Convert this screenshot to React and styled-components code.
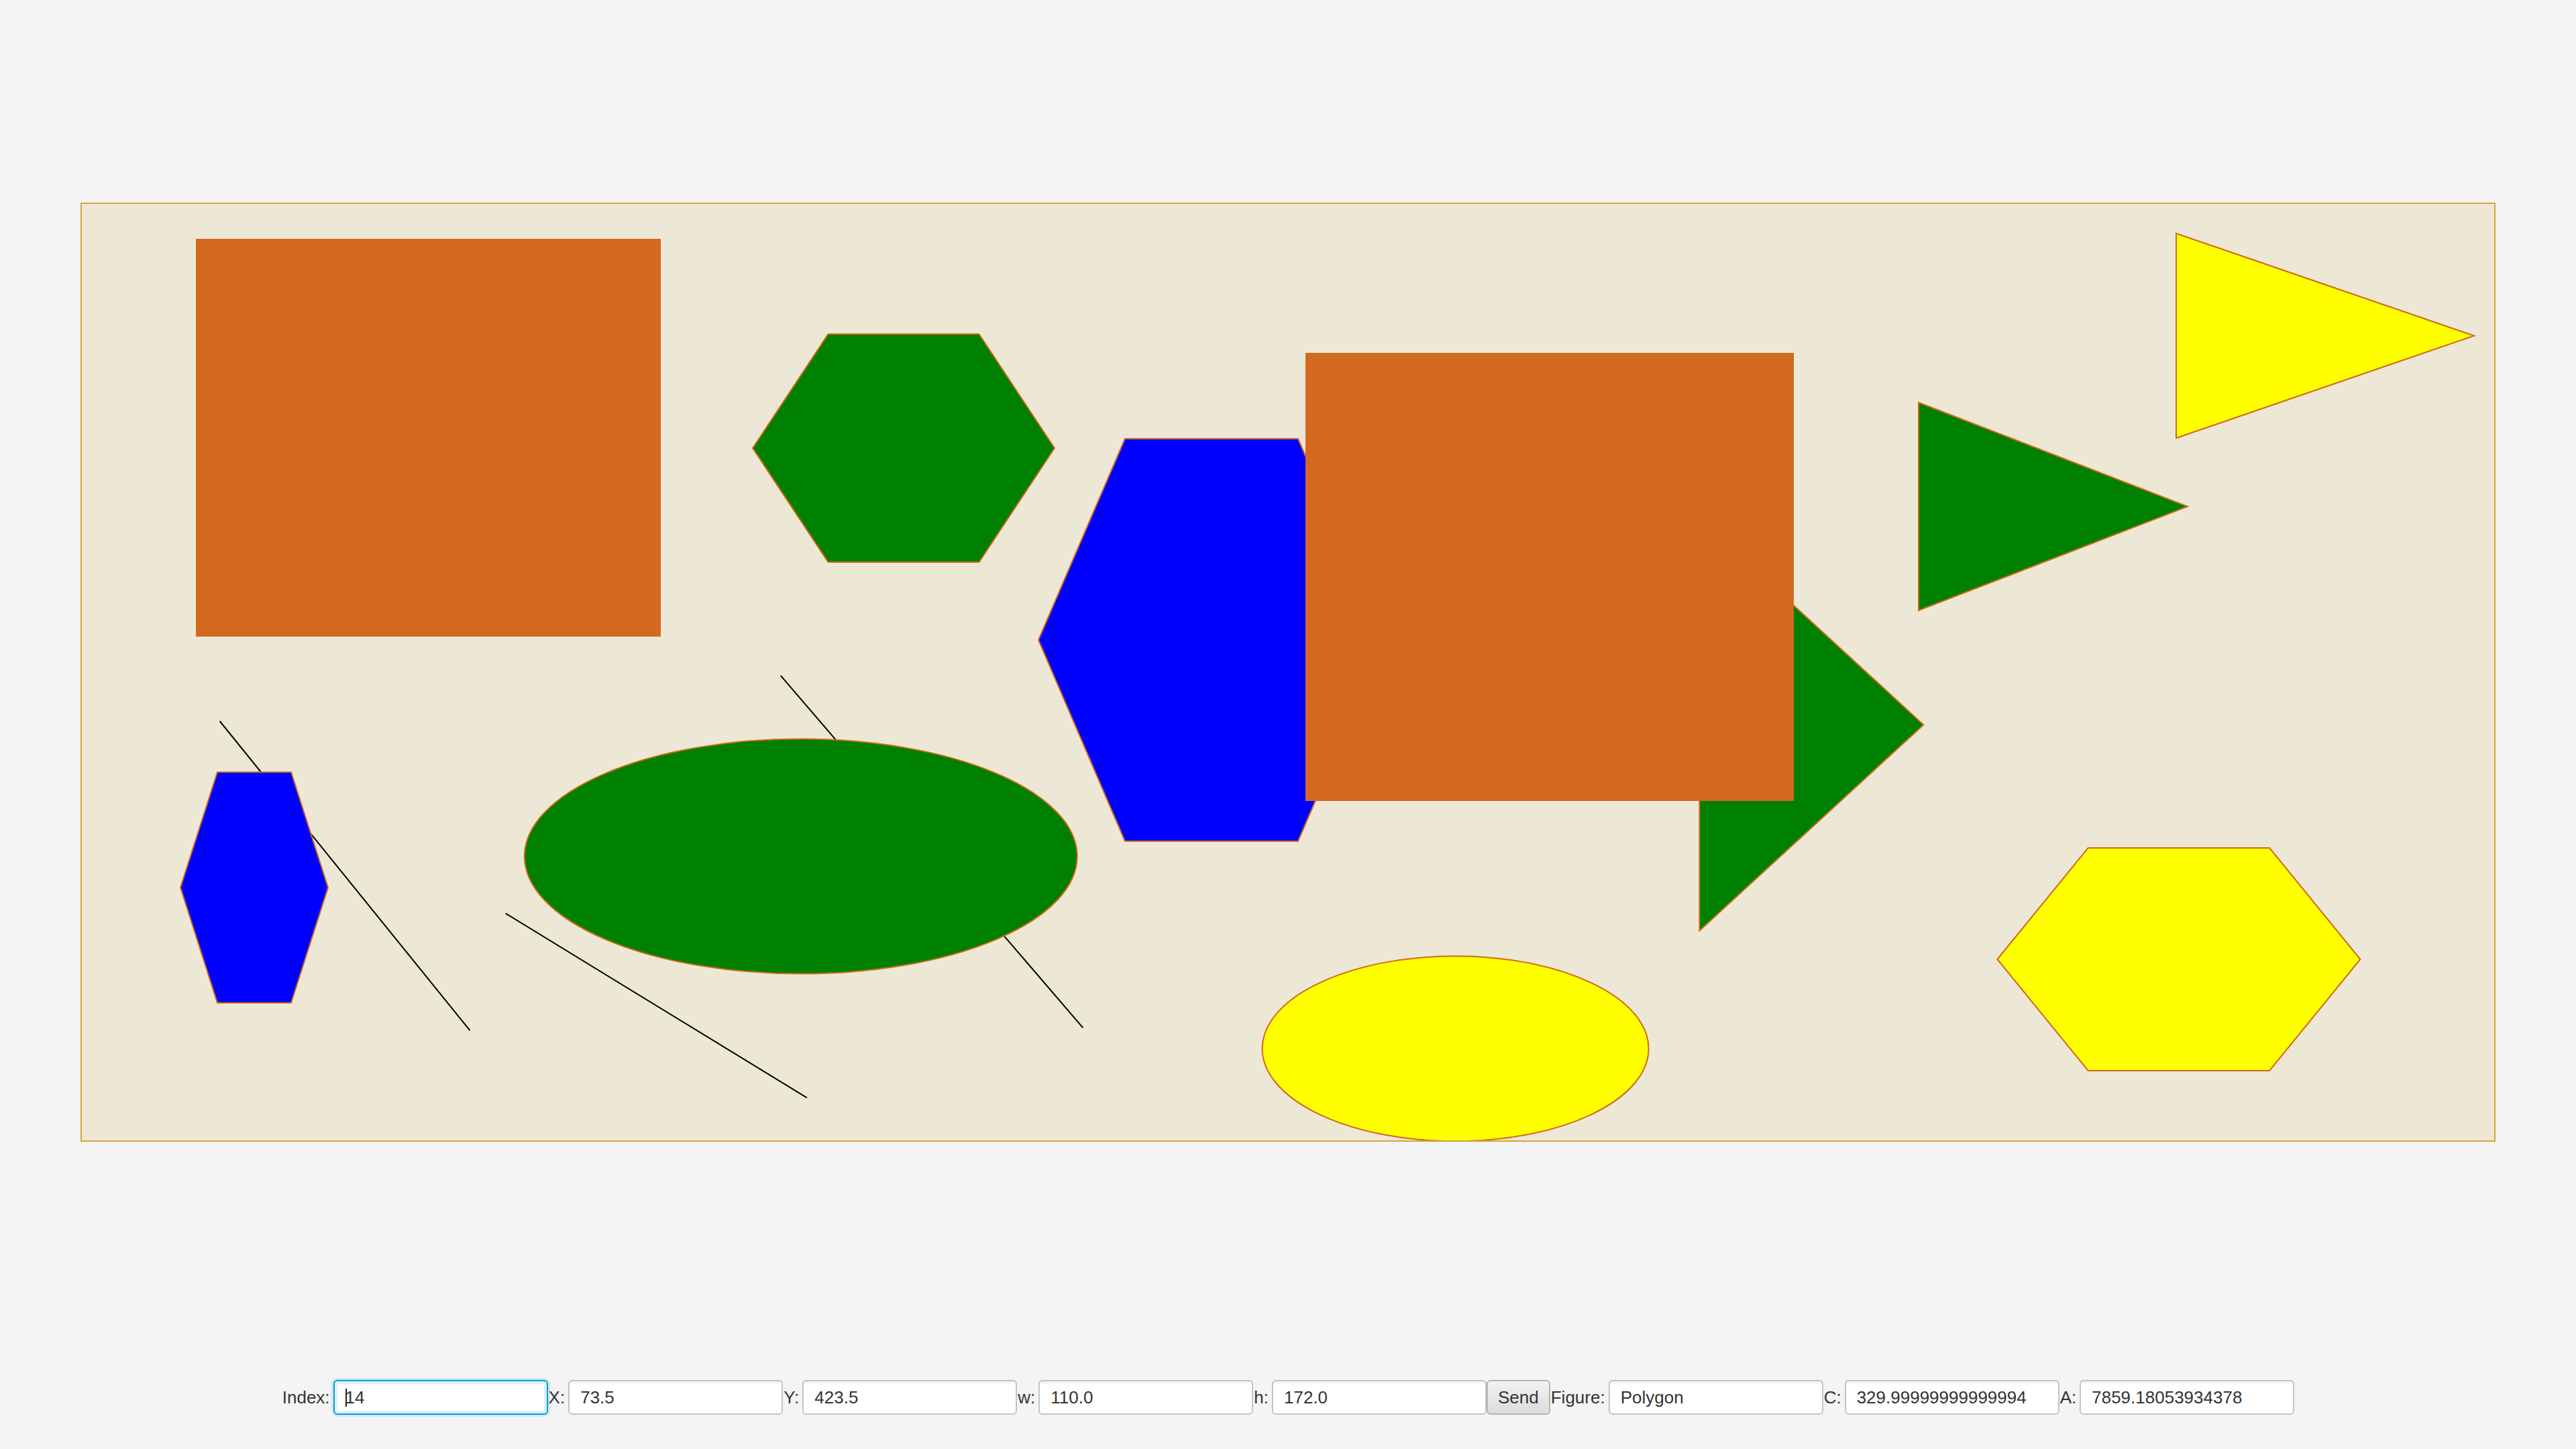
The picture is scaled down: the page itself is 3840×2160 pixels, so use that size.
import styled, { createGlobalStyle, css } from 'styled-components';

const GlobalStyle = createGlobalStyle`
  html, body {
    margin: 0;
    padding: 0;
    background: #f4f4f4;
  }
  body {
    font-family: "Liberation Sans", Arial, sans-serif;
  }
`;

// canvas coordinates (logical px, drawn at 2x)
const shapes = [
  { kind: 'rect', x: 85.5, y: 26.5, w: 345.5, h: 295.5, fill: '#d2691e' },
  { kind: 'hexagon', x: 500, y: 97, w: 225, h: 170, fill: 'green' },
  { kind: 'line', x1: 102.8, y1: 385.5, x2: 289.2, y2: 616 },
  { kind: 'hexagon', x: 73.5, y: 423.5, w: 110, h: 172, fill: 'blue' },
  { kind: 'line', x1: 520.9, y1: 351.6, x2: 746.2, y2: 614.1 },
  { kind: 'ellipse', cx: 535.9, cy: 486.3, rx: 206, ry: 87.5, fill: 'green' },
  { kind: 'line', x1: 315.9, y1: 528.8, x2: 540.4, y2: 666.2 },
  { kind: 'hexagon', x: 713, y: 175, w: 258, h: 300, fill: 'blue' },
  { kind: 'triangle', x: 1205.7, y: 234.7, w: 167, h: 307, fill: 'green' },
  { kind: 'rect', x: 912.5, y: 111.5, w: 363, h: 333, fill: '#d2691e' },
  { kind: 'triangle', x: 1369, y: 148, w: 200.5, h: 155, fill: 'green' },
  { kind: 'triangle', x: 1561, y: 22, w: 222, h: 152.5, fill: 'yellow' },
  { kind: 'ellipse', cx: 1023.8, cy: 629.6, rx: 144, ry: 69, fill: 'yellow' },
  { kind: 'hexagon', x: 1427.7, y: 480, w: 270.5, h: 166, fill: 'yellow' },
];

const fields = [
  { label: 'Index:', value: '14', focused: true },
  { label: 'X:', value: '73.5' },
  { label: 'Y:', value: '423.5' },
  { label: 'w:', value: '110.0' },
  { label: 'h:', value: '172.0' },
  { button: 'Send' },
  { label: 'Figure:', value: 'Polygon' },
  { label: 'C:', value: '329.99999999999994' },
  { label: 'A:', value: '7859.18053934378' },
];

function hexPoints({ x, y, w, h }) {
  return [
    [x, y + h / 2],
    [x + w / 4, y],
    [x + (3 * w) / 4, y],
    [x + w, y + h / 2],
    [x + (3 * w) / 4, y + h],
    [x + w / 4, y + h],
  ]
    .map((p) => p.join(','))
    .join(' ');
}

function triPoints({ x, y, w, h }) {
  return [
    [x, y],
    [x + w, y + h / 2],
    [x, y + h],
  ]
    .map((p) => p.join(','))
    .join(' ');
}

function Shape({ s }) {
  const stroke = '#d2691e';
  if (s.kind === 'rect')
    return <rect x={s.x} y={s.y} width={s.w} height={s.h} fill={s.fill} stroke={stroke} strokeWidth="1" />;
  if (s.kind === 'hexagon') return <polygon points={hexPoints(s)} fill={s.fill} stroke={stroke} strokeWidth="1" />;
  if (s.kind === 'triangle') return <polygon points={triPoints(s)} fill={s.fill} stroke={stroke} strokeWidth="1" />;
  if (s.kind === 'ellipse')
    return <ellipse cx={s.cx} cy={s.cy} rx={s.rx} ry={s.ry} fill={s.fill} stroke={stroke} strokeWidth="1" />;
  return <line x1={s.x1} y1={s.y1} x2={s.x2} y2={s.y2} stroke="black" strokeWidth="1" />;
}

export default function App() {
  return (
    <>
      <GlobalStyle />
      <Page>
        <Canvas>
          <svg width="3596" height="1396" viewBox="0 0 1798 698">
            {shapes.map((s, i) => (
              <Shape key={i} s={s} />
            ))}
          </svg>
        </Canvas>
        <Toolbar>
          {fields.map((f, i) =>
            f.button ? (
              <Button key={i}>{f.button}</Button>
            ) : (
              <Group key={i}>
                <Label>{f.label}</Label>
                <FieldBox>
                  <Input readOnly value={f.value} $focused={f.focused} />
                  {f.focused && <Caret />}
                </FieldBox>
              </Group>
            )
          )}
        </Toolbar>
      </Page>
    </>
  );
}

const Page = styled.div`
  width: 3840px;
  height: 2160px;
  display: flex;
  flex-direction: column;
  align-items: center;
  overflow: hidden;
`;

const Canvas = styled.div`
  margin-top: 302px;
  width: 3600px;
  height: 1400px;
  box-sizing: border-box;
  border: 2px solid #d5a53a;
  background: #ede8d6;
  overflow: hidden;

  & svg {
    display: block;
  }
`;

const Toolbar = styled.div`
  margin-top: 355px;
  display: flex;
  align-items: center;
  height: 52px;
`;

const Group = styled.div`
  display: flex;
  align-items: center;
`;

const Label = styled.span`
  font-size: 26px;
  color: #333;
  padding: 0 5px 0 1px;
  white-space: nowrap;
`;

const FieldBox = styled.div`
  position: relative;
`;

const Input = styled.input`
  display: block;
  width: 320px;
  height: 52px;
  box-sizing: border-box;
  padding: 0 16px;
  border: 2px solid #c4c4c4;
  border-radius: 6px;
  background: linear-gradient(#ececec, #ffffff 5px);
  font-family: "Liberation Sans", Arial, sans-serif;
  font-size: 26px;
  color: #333;
  outline: none;
  caret-color: transparent;

  ${({ $focused }) =>
    $focused &&
    css`
      border-color: #039ed3;
      background: #ffffff;
      box-shadow: 0 0 0 3px rgba(3, 158, 211, 0.14), inset 0 0 0 4px #dff0f8;
    `}
`;

const Caret = styled.span`
  position: absolute;
  left: 18px;
  top: 13px;
  width: 2px;
  height: 27px;
  background: #222;
`;

const Button = styled.button`
  height: 52px;
  box-sizing: border-box;
  padding: 0 15px;
  margin: 0;
  border: 2px solid #b4b4b4;
  border-radius: 6px;
  background: linear-gradient(#f2f2f2, #dcdcdc);
  font-family: "Liberation Sans", Arial, sans-serif;
  font-size: 26px;
  color: #333;
`;
